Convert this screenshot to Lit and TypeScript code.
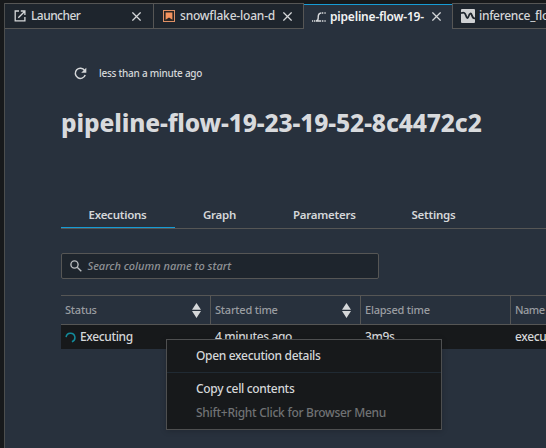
import { LitElement, html, css, svg, nothing } from "lit";

const launcherIcon = svg`<svg class="icon" width="12" height="12" viewBox="0 0 12 12" fill="none" stroke="#d5d7d9" stroke-width="1.3"><path d="M5 1H1.2v9.9h9.7V7M6.8 1h4.1v4.1M10.8 1.2 4.3 7.7"/></svg>`;
const notebookIcon = svg`<svg class="icon" width="12" height="12" viewBox="0 0 12 12"><rect x=".5" y=".5" width="11" height="11" fill="#2a2523" stroke="#e09065"/><path d="M2.6 2.4h6.8v7.3L6 7.5 2.6 9.7z" fill="#f4935f"/></svg>`;
const pipelineIcon = svg`<svg class="icon" width="14" height="10" viewBox="0 0 14 10" fill="none" stroke="#d8dadc" stroke-width="1.4"><path d="M0 9h1.2M2 9h1.4M4 9h5.2M10 9h1.4M12.4 9h1.3M4.2 8.8C6.6 8.4 6.2 7 6.2 5c0-2.4.4-3.8 3-4M9.8 1h1.5M12.4 1h1.3"/></svg>`;
const flowIcon = svg`<svg class="icon" width="14" height="14" viewBox="0 0 14 14"><rect width="14" height="14" rx="1" fill="#cfd1d3"/><path d="M0 4.3C3 2.9 4.2 4 5 6.8c.8 2.9 1.9 2.9 2.7.3C8.6 3.9 10 3.7 10.9 6.4c.7 2.2 1.4 3.2 3.1 2.9" fill="none" stroke="#1e252d" stroke-width="1.8"/></svg>`;
const closeIcon = svg`<svg class="close" width="9" height="9" viewBox="0 0 9 9" stroke="#d5d7d9" stroke-width="1.25"><path d="m.4.4 8.2 8.2M8.6.4.4 8.6"/></svg>`;
const refreshIcon = svg`<svg width="13" height="13" viewBox="0 0 13 13"><path d="M10.6 3.4A5.1 5.1 0 1 0 11.2 8" fill="none" stroke="#d5d7d9" stroke-width="1.5"/><path d="M12.3.7v5H7.2z" fill="#d5d7d9"/></svg>`;
const searchIcon = svg`<svg width="12" height="12" viewBox="0 0 12 12" fill="none" stroke="#b9bcbf" stroke-width="1.4"><circle cx="4.5" cy="4.5" r="3.6"/><path d="m7.2 7.2 4.1 4.1"/></svg>`;
const sortIcon = svg`<svg class="sort" width="9" height="15" viewBox="0 0 9 15" fill="#d5d7d9"><path d="M4.5 0 9 6.7H0zM4.5 15 9 8.1H0z"/></svg>`;
const spinnerIcon = svg`<svg width="11" height="11" viewBox="0 0 11 11" fill="none" stroke="#128b9b" stroke-width="1.5"><path d="M1.1 5.1A4.4 4.4 0 1 1 6.9 9.7"/></svg>`;

const docTabs = [
  { kind: "launcher", icon: launcherIcon, label: "Launcher", closable: true },
  { kind: "notebook", icon: notebookIcon, label: "snowflake-loan-d", closable: true },
  { kind: "pipeline active", icon: pipelineIcon, label: "pipeline-flow-19-", closable: true },
  { kind: "flow", icon: flowIcon, label: "inference_flow", closable: false },
];

const columns = [
  { name: "Status", sortable: true, value: "Executing", busy: true },
  { name: "Started time", sortable: true, value: "4 minutes ago", busy: false },
  { name: "Elapsed time", sortable: false, value: "3m9s", busy: false },
  { name: "Name", sortable: false, value: "execution", busy: false },
];

class AppRoot extends LitElement {
  static styles = css`
    :host {
      display: block;
      position: relative;
      box-sizing: border-box;
      height: 448px;
      padding: 3px 0 0 4px;
      overflow: hidden;
      background: #17191b;
      color: #d5d7d9;
      font: 500 12px/16px "Noto Sans", "Open Sans", sans-serif;
      white-space: nowrap;
    }
    * { box-sizing: border-box; }
    svg { display: block; flex: none; }
    .panel { height: 445px; border-left: 1px solid #4c4e4e; background: #28313d; }
    .tabs { display: flex; height: 26px; }
    .tab {
      display: flex;
      flex: none;
      align-items: center;
      width: 150px;
      padding: 0 12px 0 9px;
      border: solid #565655;
      border-width: 1px 1px 1px 0;
      background: #1e252d;
      overflow: hidden;
    }
    .tab .close { margin-left: auto; }
    .launcher { width: 149px; }
    .launcher .icon { margin-right: 5px; }
    .launcher .label { letter-spacing: -.55px; }
    .notebook .icon { margin-right: 5px; }
    .notebook .label { letter-spacing: -.2px; }
    .notebook { padding-right: 11px; }
    .pipeline { width: 148px; padding: 0 11px 0 8px; }
    .pipeline .icon { margin-right: 4px; }
    .pipeline .label { font-weight: 600; letter-spacing: -.19px; }
    .active {
      border: 0;
      border-top: 1px solid #17191b;
      background: linear-gradient(#169bd5 1px, #28313d 1px);
      color: #f2f3f3;
    }
    .flow { border-left-width: 1px; padding: 0 0 0 8px; }
    .flow .icon { margin-right: 4px; }
    .flow .label { letter-spacing: -.31px; }
    .page { padding-left: 56px; }
    .refresh { display: flex; align-items: center; gap: 12px; height: 16px; margin: 36px 0 0 13px; }
    .refresh span { font-size: 10px; letter-spacing: -.25px; }
    h1 { margin: 26px 0 0; font-size: 24.5px; line-height: 32px; font-weight: 800; letter-spacing: -.12px; color: #d8dadd; }
    nav { display: flex; margin-top: 60px; height: 30px; border-bottom: 1px solid #565655; font-size: 11.5px; font-weight: 600; letter-spacing: -.25px; }
    nav span { flex: none; height: 29px; padding: 8px 0 0 28px; }
    nav span:nth-child(1) { width: 114px; padding-left: 27.5px; border-bottom: 1px solid #169bd5; }
    nav span:nth-child(2) { width: 90px; }
    nav span:nth-child(3) { width: 118.5px; }
    .search {
      display: flex;
      align-items: center;
      width: 318px;
      height: 26px;
      margin-top: 24px;
      padding-left: 8px;
      gap: 5.5px;
      border: 1px solid #565655;
      border-radius: 2px;
      background: #1e252d;
      color: #8f9296;
      font-size: 11px;
      font-style: italic;
    }
    .grid { display: grid; grid-template-columns: 150px 150px 150px 1fr; margin-top: 16px; }
    .head {
      display: flex;
      align-items: center;
      height: 30px;
      padding: 0 9px 0 4px;
      border: solid #565655;
      border-width: 1px 1px 1px 0;
      color: #9a9da1;
      font-size: 11px;
      letter-spacing: -.22px;
    }
    .head:nth-child(4) { border-right: 0; letter-spacing: -.5px; }
    .sort { margin-left: auto; }
    .cell {
      display: flex;
      align-items: center;
      gap: 4px;
      height: 24px;
      padding-left: 4px;
      background: #17191b;
      letter-spacing: -.36px;
      overflow: hidden;
    }
    .menu {
      position: absolute;
      left: 166px;
      top: 339px;
      width: 276px;
      height: 91px;
      border: 1px solid #4e4f50;
      background: #17191b;
      box-shadow: 0 1px 6px rgba(0, 0, 0, .2);
      letter-spacing: -.32px;
    }
    .item { height: 24px; padding: 4px 0 0 29px; }
    .item.first { height: 33px; padding-top: 8px; border-bottom: 1px solid #202a33; }
    .item.second { height: 28px; padding-top: 8px; }
    .item.hint { color: #707274; letter-spacing: -.28px; }
  `;

  render() {
    return html`
      <div class="panel">
        <div class="tabs">
          ${docTabs.map((t) => html`<div class="tab ${t.kind}">${t.icon}<span class="label">${t.label}</span>${t.closable ? closeIcon : nothing}</div>`)}
        </div>
        <div class="page">
          <div class="refresh">${refreshIcon}<span>less than a minute ago</span></div>
          <h1>pipeline-flow-19-23-19-52-8c4472c2</h1>
          <nav><span>Executions</span><span>Graph</span><span>Parameters</span><span>Settings</span></nav>
          <div class="search">${searchIcon}<span>Search column name to start</span></div>
          <div class="grid">
            ${columns.map((c) => html`<div class="head">${c.name}${c.sortable ? sortIcon : nothing}</div>`)}
            ${columns.map((c) => html`<div class="cell">${c.busy ? spinnerIcon : nothing}${c.value}</div>`)}
          </div>
        </div>
      </div>
      <div class="menu">
        <div class="item first">Open execution details</div>
        <div class="item second">Copy cell contents</div>
        <div class="item hint">Shift+Right Click for Browser Menu</div>
      </div>
    `;
  }
}
customElements.define("app-root", AppRoot);
